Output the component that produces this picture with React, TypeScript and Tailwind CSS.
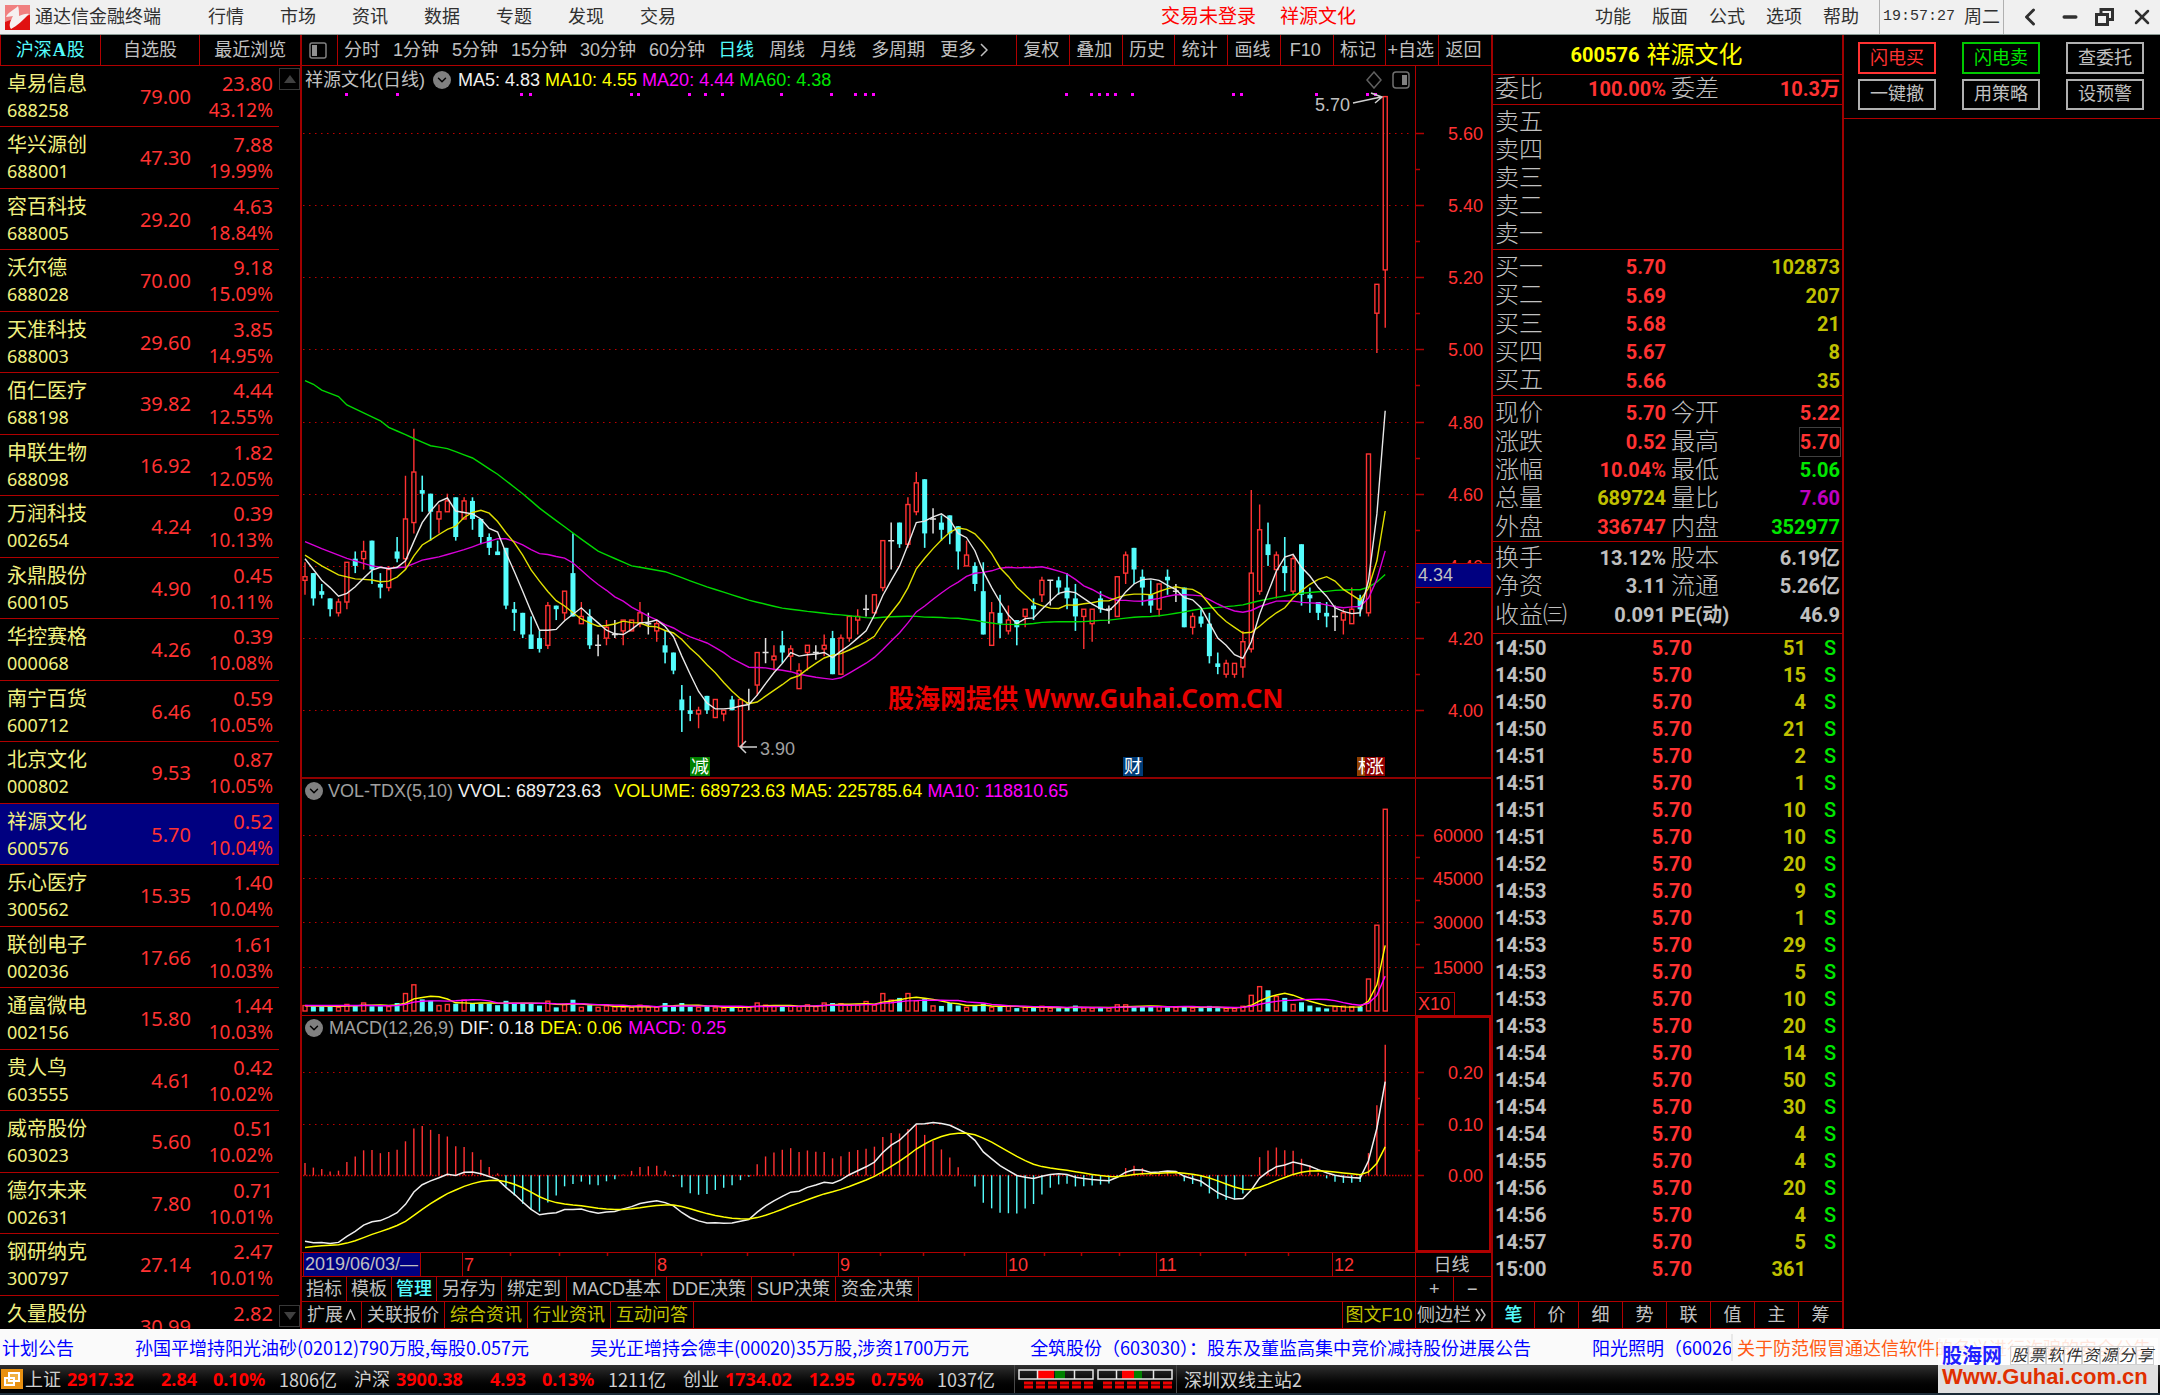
import React from 'react';
import { ChevronDown, ChevronLeft, Minus, X } from 'lucide-react';

const RED = '#ff3232';
const LINE = '#b00000';
const CYAN = '#54fcfc';

// name, code, price, change, percent; the last row is cut by the ticker
const stocks: string[][] = [
  ['卓易信息', '688258', '79.00', '23.80', '43.12%'],
  ['华兴源创', '688001', '47.30', '7.88', '19.99%'],
  ['容百科技', '688005', '29.20', '4.63', '18.84%'],
  ['沃尔德', '688028', '70.00', '9.18', '15.09%'],
  ['天准科技', '688003', '29.60', '3.85', '14.95%'],
  ['佰仁医疗', '688198', '39.82', '4.44', '12.55%'],
  ['申联生物', '688098', '16.92', '1.82', '12.05%'],
  ['万润科技', '002654', '4.24', '0.39', '10.13%'],
  ['永鼎股份', '600105', '4.90', '0.45', '10.11%'],
  ['华控赛格', '000068', '4.26', '0.39', '10.08%'],
  ['南宁百货', '600712', '6.46', '0.59', '10.05%'],
  ['北京文化', '000802', '9.53', '0.87', '10.05%'],
  ['祥源文化', '600576', '5.70', '0.52', '10.04%'],
  ['乐心医疗', '300562', '15.35', '1.40', '10.04%'],
  ['联创电子', '002036', '17.66', '1.61', '10.03%'],
  ['通富微电', '002156', '15.80', '1.44', '10.03%'],
  ['贵人鸟', '603555', '4.61', '0.42', '10.02%'],
  ['威帝股份', '603023', '5.60', '0.51', '10.02%'],
  ['德尔未来', '002631', '7.80', '0.71', '10.01%'],
  ['钢研纳克', '300797', '27.14', '2.47', '10.01%'],
  ['久量股份', '', '30.99', '2.82', ''],
];

type Kind = 'r' | 'c' | 'w';
type Candle = [number, number, number, number, Kind];

// high, body top, body bottom, low, kind (up / down / flat)
const candles: Candle[] = [
  [4.41, 4.37, 4.36, 4.32, 'r'], [4.38, 4.38, 4.31, 4.29, 'c'], [4.35, 4.33, 4.32, 4.31, 'c'], [4.31, 4.31, 4.28, 4.26, 'c'], [4.31, 4.3, 4.27, 4.26, 'r'],
  [4.41, 4.41, 4.3, 4.28, 'r'], [4.44, 4.42, 4.4, 4.38, 'c'], [4.47, 4.44, 4.42, 4.39, 'r'], [4.47, 4.47, 4.39, 4.35, 'c'], [4.38, 4.35, 4.34, 4.31, 'c'],
  [4.4, 4.39, 4.34, 4.33, 'r'], [4.48, 4.44, 4.42, 4.41, 'c'], [4.65, 4.53, 4.42, 4.39, 'r'], [4.78, 4.66, 4.52, 4.49, 'r'], [4.65, 4.61, 4.6, 4.55, 'c'],
  [4.6, 4.6, 4.55, 4.47, 'c'], [4.57, 4.55, 4.53, 4.49, 'r'], [4.6, 4.58, 4.55, 4.55, 'r'], [4.59, 4.59, 4.48, 4.47, 'c'], [4.59, 4.58, 4.53, 4.53, 'r'],
  [4.59, 4.58, 4.53, 4.5, 'c'], [4.53, 4.53, 4.48, 4.46, 'c'], [4.49, 4.48, 4.45, 4.43, 'c'], [4.47, 4.44, 4.43, 4.43, 'c'], [4.45, 4.45, 4.29, 4.28, 'c'],
  [4.3, 4.28, 4.27, 4.22, 'c'], [4.27, 4.27, 4.21, 4.2, 'c'], [4.26, 4.21, 4.17, 4.17, 'c'], [4.22, 4.2, 4.17, 4.16, 'c'], [4.3, 4.29, 4.18, 4.17, 'r'],
  [4.29, 4.29, 4.28, 4.25, 'c'], [4.33, 4.33, 4.27, 4.25, 'r'], [4.49, 4.38, 4.26, 4.26, 'c'], [4.3, 4.26, 4.24, 4.24, 'r'], [4.28, 4.26, 4.18, 4.17, 'c'],
  [4.21, 4.18, 4.18, 4.15, 'w'], [4.25, 4.23, 4.2, 4.18, 'r'], [4.25, 4.21, 4.21, 4.2, 'w'], [4.25, 4.25, 4.22, 4.18, 'r'], [4.25, 4.25, 4.22, 4.22, 'r'],
  [4.3, 4.27, 4.24, 4.23, 'r'], [4.27, 4.24, 4.24, 4.21, 'w'], [4.25, 4.24, 4.22, 4.19, 'r'], [4.22, 4.18, 4.16, 4.13, 'c'], [4.16, 4.16, 4.11, 4.1, 'c'],
  [4.07, 4.03, 4, 3.94, 'c'], [4.04, 4, 3.99, 3.97, 'c'], [4.01, 4, 3.99, 3.95, 'r'], [4.04, 4.04, 4, 3.99, 'c'], [4.03, 4.03, 3.98, 3.98, 'r'],
  [4, 4, 3.99, 3.97, 'r'], [4.04, 4.03, 4, 4, 'c'], [4.03, 4.03, 3.9, 3.9, 'r'], [4.06, 4.02, 4.02, 4, 'w'], [4.16, 4.16, 4.07, 4.04, 'r'],
  [4.2, 4.16, 4.16, 4.13, 'w'], [4.18, 4.15, 4.14, 4.11, 'r'], [4.22, 4.18, 4.16, 4.13, 'c'], [4.18, 4.17, 4.15, 4.11, 'r'], [4.13, 4.11, 4.06, 4.06, 'r'],
  [4.18, 4.18, 4.16, 4.11, 'r'], [4.18, 4.16, 4.16, 4.14, 'w'], [4.21, 4.18, 4.17, 4.15, 'r'], [4.22, 4.2, 4.1, 4.1, 'c'], [4.21, 4.2, 4.1, 4.1, 'r'],
  [4.26, 4.26, 4.2, 4.19, 'r'], [4.28, 4.26, 4.25, 4.21, 'r'], [4.32, 4.28, 4.28, 4.26, 'w'], [4.32, 4.32, 4.27, 4.27, 'r'], [4.47, 4.47, 4.34, 4.33, 'r'],
  [4.52, 4.47, 4.47, 4.39, 'w'], [4.52, 4.52, 4.46, 4.45, 'c'], [4.59, 4.57, 4.46, 4.45, 'r'], [4.66, 4.63, 4.55, 4.54, 'r'], [4.64, 4.64, 4.49, 4.45, 'c'],
  [4.56, 4.53, 4.53, 4.49, 'w'], [4.54, 4.52, 4.5, 4.47, 'c'], [4.54, 4.54, 4.49, 4.46, 'c'], [4.51, 4.51, 4.44, 4.39, 'c'], [4.47, 4.43, 4.4, 4.4, 'r'],
  [4.41, 4.4, 4.35, 4.33, 'c'], [4.41, 4.33, 4.21, 4.21, 'c'], [4.3, 4.27, 4.18, 4.18, 'r'], [4.32, 4.27, 4.24, 4.2, 'c'], [4.29, 4.25, 4.22, 4.21, 'r'],
  [4.25, 4.25, 4.23, 4.18, 'c'], [4.28, 4.28, 4.26, 4.23, 'r'], [4.31, 4.29, 4.28, 4.25, 'c'], [4.37, 4.36, 4.32, 4.3, 'r'], [4.36, 4.36, 4.36, 4.29, 'w'],
  [4.37, 4.36, 4.34, 4.32, 'c'], [4.38, 4.34, 4.31, 4.28, 'c'], [4.35, 4.31, 4.26, 4.22, 'c'], [4.28, 4.28, 4.26, 4.17, 'r'], [4.28, 4.28, 4.24, 4.19, 'r'],
  [4.33, 4.31, 4.28, 4.27, 'c'], [4.29, 4.28, 4.28, 4.24, 'w'], [4.37, 4.37, 4.26, 4.26, 'r'], [4.44, 4.43, 4.38, 4.35, 'r'], [4.45, 4.45, 4.39, 4.35, 'c'],
  [4.39, 4.37, 4.34, 4.29, 'c'], [4.36, 4.32, 4.29, 4.27, 'c'], [4.35, 4.35, 4.28, 4.26, 'r'], [4.39, 4.37, 4.36, 4.32, 'c'], [4.35, 4.33, 4.33, 4.3, 'w'],
  [4.34, 4.34, 4.23, 4.23, 'c'], [4.27, 4.26, 4.23, 4.21, 'r'], [4.28, 4.26, 4.24, 4.23, 'c'], [4.27, 4.24, 4.15, 4.13, 'c'], [4.16, 4.13, 4.12, 4.1, 'c'],
  [4.14, 4.13, 4.1, 4.09, 'r'], [4.13, 4.13, 4.1, 4.09, 'r'], [4.22, 4.19, 4.12, 4.09, 'r'], [4.61, 4.38, 4.17, 4.16, 'r'], [4.57, 4.5, 4.33, 4.32, 'r'],
  [4.52, 4.46, 4.43, 4.4, 'c'], [4.44, 4.43, 4.39, 4.31, 'r'], [4.48, 4.4, 4.38, 4.33, 'c'], [4.43, 4.42, 4.33, 4.32, 'r'], [4.46, 4.46, 4.32, 4.29, 'c'],
  [4.34, 4.32, 4.31, 4.27, 'c'], [4.3, 4.3, 4.27, 4.25, 'c'], [4.3, 4.27, 4.26, 4.23, 'c'], [4.29, 4.26, 4.26, 4.22, 'w'], [4.28, 4.27, 4.25, 4.21, 'r'],
  [4.34, 4.28, 4.24, 4.24, 'r'], [4.32, 4.31, 4.28, 4.26, 'c'], [4.71, 4.71, 4.27, 4.26, 'r'], [5.18, 5.18, 5.1, 4.99, 'r'], [5.7, 5.7, 5.22, 5.06, 'r'],
];

// one unit is 124 lots on the X10 scale
const volumes = [
  15, 13, 13, 13, 10, 18, 16, 22, 13, 13, 12, 22, 48, 72, 32, 28, 15, 18, 20, 30, 22, 20, 20, 16, 28, 22,
  20, 20, 15, 27, 10, 18, 31, 10, 16, 10, 14, 12, 10, 10, 16, 11, 10, 22, 13, 22, 12, 10, 13, 9, 8, 9,
  12, 12, 22, 16, 14, 12, 13, 12, 17, 12, 22, 22, 20, 16, 17, 26, 16, 48, 30, 36, 48, 28, 34, 14, 14, 22,
  15, 10, 14, 20, 10, 12, 13, 8, 10, 9, 13, 8, 8, 8, 15, 9, 8, 8, 8, 17, 17, 12, 12, 12, 12, 10,
  10, 13, 8, 8, 14, 8, 7, 7, 13, 43, 67, 57, 40, 36, 18, 24, 15, 10, 7, 12, 13, 12, 12, 88, 236, 555,
];

const closes = candles.map(([, top, bottom, , kind]) => (kind === 'r' ? top : bottom));

const px = (i: number) => 3 + i * 8.374;
const priceY = (p: number) => 644.3 - (p - 4) * 361;
const volY = (v: number) => 232 - v * 0.3635;
const macdY = (v: number) => 159.3 - v * 516;

// moving average; the days before the window is full come from known points
function average(data: number[], n: number, seed: number[][]) {
  return data.map((_, i) => {
    if (i >= n - 1) {
      return data.slice(i - n + 1, i + 1).reduce((a, b) => a + b, 0) / n;
    }
    const next = seed.findIndex(([k]) => k >= i);
    if (next === -1) return seed[seed.length - 1][1];
    if (next === 0) return seed[0][1];
    const [k0, v0] = seed[next - 1];
    const [k1, v1] = seed[next];
    return v0 + ((v1 - v0) * (i - k0)) / (k1 - k0);
  });
}

const toPoints = (values: number[], y: (v: number) => number) =>
  values.map((v, i) => `${px(i).toFixed(1)},${y(v).toFixed(1)}`).join(' ');

const priceLines = [
  { color: '#00d800', values: average(closes, 60, [[0, 4.913], [1, 4.903], [2, 4.887], [4, 4.869], [5, 4.846], [9, 4.802], [10, 4.784], [13, 4.753], [15, 4.733], [17, 4.725], [20, 4.699], [23, 4.654], [26, 4.6], [28, 4.56], [32, 4.491], [35, 4.441], [39, 4.4], [43, 4.384], [48, 4.342], [53, 4.305], [57, 4.283], [61, 4.271]]) },
  { color: '#d800d8', values: average(closes, 20, [[0, 4.467], [2, 4.448], [5, 4.421], [8, 4.4], [10, 4.393], [12, 4.397], [14, 4.416], [16, 4.425], [18, 4.438]]) },
  { color: '#e0e000', values: average(closes, 10, [[0, 4.43], [2, 4.4], [4, 4.375], [6, 4.364], [8, 4.361]]) },
  { color: '#e8e8e8', values: average(closes, 5, [[0, 4.42], [1, 4.39], [2, 4.36], [3, 4.34]]) },
];

const volumeLines = [
  { color: '#ffff00', values: average(volumes, 5, [[0, 14], [4, 13]]) },
  { color: '#ff00ff', values: average(volumes, 10, [[0, 15], [9, 15]]) },
];

function buildMacd() {
  let fast = 4.462;
  let slow = 4.59;
  let dea = -0.14;
  return closes.map((c, i) => {
    if (i > 0) {
      fast += ((c - fast) * 2) / 13;
      slow += ((c - slow) * 2) / 27;
    }
    const dif = fast - slow;
    if (i > 0) dea += (dif - dea) * 0.2;
    return { dif, dea, bar: 2 * (dif - dea) };
  });
}
const macd = buildMacd();

const signalDots = [45, 96, 220, 229, 330, 337, 388, 404, 421, 480, 530, 554, 564, 572, 765, 790, 798, 806, 814, 831, 932, 940, 1015, 1066, 1074];

const months: [number, string][] = [[161, '7'], [354, '8'], [537, '9'], [705, '10'], [855, '11'], [1031, '12']];
const weekTicks = [209, 258, 306, 400, 446, 492, 579, 622, 663, 743, 780, 818, 899, 944, 987];

// time, volume, side
const trades: [string, string, string][] = [
  ['14:50', '51', 'S'], ['14:50', '15', 'S'], ['14:50', '4', 'S'], ['14:50', '21', 'S'],
  ['14:51', '2', 'S'], ['14:51', '1', 'S'], ['14:51', '10', 'S'], ['14:51', '10', 'S'],
  ['14:52', '20', 'S'], ['14:53', '9', 'S'], ['14:53', '1', 'S'], ['14:53', '29', 'S'],
  ['14:53', '5', 'S'], ['14:53', '10', 'S'], ['14:53', '20', 'S'], ['14:54', '14', 'S'],
  ['14:54', '50', 'S'], ['14:54', '30', 'S'], ['14:54', '4', 'S'], ['14:55', '4', 'S'],
  ['14:56', '20', 'S'], ['14:56', '4', 'S'], ['14:57', '5', 'S'], ['15:00', '361', ''],
];

const TitleBar: React.FC = () => (
  <header className="flex h-[35px] shrink-0 items-center border-b border-[#8a9a94] bg-[#f0f0f0] text-[18px] text-[#303030]">
    <svg className="ml-[5px] h-[25px] w-[25px]" viewBox="0 0 25 25" aria-hidden="true">
      <rect width="25" height="25" fill="#e01010" />
      <path d="M0 0h25v10C17 11 8 14 0 17z" fill="#f08080" />
      <path d="M13 1C9 5 3 7 1 12c3 0 5-1 7-1-2 4-5 9-2 13 6-3 12-9 18-15-3-1-7 1-10 2 0-4 0-7-1-10z" fill="#f6f0f0" />
    </svg>
    <span className="ml-[5px]">通达信金融终端</span>
    <nav className="ml-[47px] flex gap-9">
      {['行情', '市场', '资讯', '数据', '专题', '发现', '交易'].map((m) => (
        <button key={m} type="button">{m}</button>
      ))}
    </nav>
    <div className="flex flex-1 justify-end gap-6 pr-[239px] text-[19px] text-[#ff0000]">
      <button type="button">交易未登录</button>
      <button type="button">祥源文化</button>
    </div>
    <nav className="flex gap-[21px]">
      {['功能', '版面', '公式', '选项', '帮助'].map((m) => (
        <button key={m} type="button">{m}</button>
      ))}
    </nav>
    <div className="ml-5 flex h-full w-[125px] items-center justify-center gap-[9px] border-x border-[#b0b0b0]">
      <time className="font-['Liberation_Mono',monospace] text-[15px]">19:57:27</time>
      <span>周二</span>
    </div>
    <div className="flex w-[156px] items-center justify-between pr-1.5 pl-3">
      <button type="button" aria-label="后退"><ChevronLeft className="h-7 w-7" strokeWidth={2.5} /></button>
      <button type="button" aria-label="最小化"><Minus className="h-5 w-5" strokeWidth={4} /></button>
      <button type="button" aria-label="还原">
        <svg className="h-[18px] w-[19px]" viewBox="0 0 19 18" fill="none" stroke="currentColor" strokeWidth="3">
          <path d="M1.5 6.5h11v10h-11z" />
          <path d="M6 6V1.5h11.500v10H13" />
        </svg>
      </button>
      <button type="button" aria-label="关闭"><X className="h-6 w-6" strokeWidth={2.5} /></button>
    </div>
  </header>
);

const StockList: React.FC = () => (
  <aside className="flex w-[302px] shrink-0 flex-col border-r-2 border-[#a00000]">
    <div className="grid h-[31px] shrink-0 grid-cols-3 border-b border-l border-[#b00000] text-[18px] text-[#c0c0c0]">
      <button type="button" className="border-r border-[#b00000] text-[#54fcfc]">
        沪深<b className="mx-px font-['Liberation_Serif',serif]">A</b>股
      </button>
      <button type="button" className="border-r border-[#b00000]">自选股</button>
      <button type="button">最近浏览</button>
    </div>
    <div className="flex min-h-0 flex-1 overflow-hidden">
      <table className="block flex-1 overflow-hidden font-['Noto_Sans','Noto_Sans_CJK_SC',sans-serif] leading-[26px] text-[#ff3232]">
        <tbody className="block">
          {stocks.map(([name, code, price, change, percent]) => (
            <tr
              key={name}
              className={`flex h-[61px] items-start border-b border-[#b00000] pt-[5px] pr-[6px] pl-[7px] even:h-[62px] ${
                code === '600576' ? 'bg-[#000080]' : ''
              }`}
            >
              <td className="w-[90px] p-0 text-[#f0f080]">
                <div className="text-[20px]">{name}</div>
                <div className="text-[18px]">{code}</div>
              </td>
              <td className="w-[94px] p-0 pt-[13px] text-right text-[20px]">{price}</td>
              <td className="flex-1 p-0 text-right">
                <div className="text-[20px]">{change}</div>
                <div className="text-[19px]">{percent}</div>
              </td>
            </tr>
          ))}
        </tbody>
      </table>
      <div className="flex w-[21px] flex-col justify-between py-0.5">
        <button type="button" aria-label="上移" className="flex h-[22px] items-center justify-center border border-[#383838]">
          <svg className="h-2 w-3" viewBox="0 0 12 8"><path d="M6 0l6 8H0z" fill="#404040" /></svg>
        </button>
        <button type="button" aria-label="下移" className="flex h-[22px] items-center justify-center border border-[#383838]">
          <svg className="h-2 w-3" viewBox="0 0 12 8"><path d="M0 0h12L6 8z" fill="#404040" /></svg>
        </button>
      </div>
    </div>
  </aside>
);

const ChartToolbar: React.FC = () => (
  <div className="flex h-[31px] shrink-0 items-center border-b border-[#b00000] text-[18px] text-[#c0c0c0]">
    <button type="button" aria-label="侧栏" className="flex h-full w-[35px] items-center pl-[7px]">
      <svg className="h-[17px] w-[18px]" viewBox="0 0 18 17" fill="none">
        <rect x="1" y="1" width="16" height="15" rx="2" stroke="#808080" strokeWidth="1.500" />
        <rect x="3" y="3" width="5" height="11" fill="#909090" />
      </svg>
    </button>
    <div className="flex h-full items-center gap-[13px] border-l border-[#b00000] pl-[6px]">
      {['分时', '1分钟', '5分钟', '15分钟', '30分钟', '60分钟'].map((p) => (
        <button key={p} type="button">{p}</button>
      ))}
    </div>
    <div className="ml-[13px] flex items-center gap-[15px]">
      <button type="button" className="text-[#54fcfc]">日线</button>
      <button type="button">周线</button>
      <button type="button">月线</button>
      <button type="button">多周期</button>
      <button type="button" className="flex items-center gap-1">
        更多
        <svg className="h-[14px] w-2" viewBox="0 0 8 14" fill="none" stroke="currentColor" strokeWidth="1.500">
          <path d="M1 1l6 6-6 6" />
        </svg>
      </button>
    </div>
    <div className="ml-auto grid h-full w-[475px] grid-cols-9">
      {['复权', '叠加', '历史', '统计', '画线', 'F10', '标记', '+自选', '返回'].map((p) => (
        <button key={p} type="button" className="border-l border-[#b00000] pr-[3px] whitespace-nowrap">{p}</button>
      ))}
    </div>
  </div>
);

const Toggle: React.FC = () => (
  <button type="button" aria-label="参数" className="flex h-[18px] w-[18px] items-center justify-center rounded-full bg-[#808080] text-black">
    <ChevronDown className="h-3.5 w-3.5" strokeWidth={2.5} />
  </button>
);

const Grid: React.FC<{ ys: number[] }> = ({ ys }) => (
  <g stroke="#c00000" strokeWidth="1" strokeDasharray="1.5 4.5">
    {ys.map((y) => (
      <path key={y} d={`M1 ${Math.round(y) + 0.5}H1110`} />
    ))}
  </g>
);

interface AxisProps {
  height: number;
  labels: [number, string][];
  minor: number[];
}

const Axis: React.FC<AxisProps> = ({ height, labels, minor }) => (
  <svg className="block h-full w-full" viewBox={`0 0 75 ${height}`} preserveAspectRatio="xMinYMin meet">
    {labels.map(([y, text]) => (
      <g key={text}>
        <path d={`M0 ${Math.round(y) + 0.5}h8`} stroke={LINE} strokeWidth="1.5" />
        <text x="67" y={y + 7} textAnchor="end" fontSize="18" fill={RED}>{text}</text>
      </g>
    ))}
    {minor.map((y) => (
      <path key={y} d={`M0 ${Math.round(y) + 0.5}h4`} stroke={LINE} strokeWidth="1.5" />
    ))}
  </svg>
);

const PricePane: React.FC = () => {
  const grid = [5.6, 5.4, 5.2, 5, 4.8, 4.6, 4.4, 4.2, 4];
  return (
    <section className="flex min-h-0 flex-1 border-b-2 border-[#900000]">
      <div className="flex min-w-0 flex-1 flex-col">
        <div className="flex h-7 shrink-0 items-center gap-[5px] pl-[3px] text-[18px]">
          <div className="flex items-center gap-2 pr-0.5 text-[#c0c0c0]">
            祥源文化(日线)
            <Toggle />
          </div>
          <span className="text-[#f0f0f0]">MA5: 4.83</span>
          <span className="text-[#ffff00]">MA10: 4.55</span>
          <span className="text-[#ff00ff]">MA20: 4.44</span>
          <span className="text-[#00e600]">MA60: 4.38</span>
          <svg className="mr-1 ml-auto h-[18px] w-[46px]" viewBox="0 0 46 18" fill="none" stroke="#606060" strokeWidth="1.500">
            <path d="M9 1l7 8-7 8-7-8z" />
            <rect x="28" y="1" width="16" height="16" rx="3" stroke="#707070" />
            <rect x="37" y="4" width="5" height="10" fill="#808080" stroke="none" />
          </svg>
        </div>
        <svg className="block min-h-0 w-full flex-1 overflow-visible" viewBox="0 28 1113 683" preserveAspectRatio="xMinYMin meet">
          <Grid ys={grid.map(priceY)} />
          {signalDots.map((x) => (
            <rect key={x} x={x - 2} y="27" width="3" height="3" fill="#ff00ff" />
          ))}
          {candles.map(([high, top, bottom, low, kind], i) => {
            const x = px(i);
            if (kind === 'w') {
              return <path key={i} d={`M${x} ${priceY(high)}V${priceY(low)}M${x - 3} ${priceY(top)}h6`} stroke="#e0e0e0" strokeWidth="1.500" />;
            }
            if (kind === 'c') {
              return (
                <g key={i} fill={CYAN}>
                  <rect x={x - 0.8} y={priceY(high)} width="1.600" height={priceY(low) - priceY(high)} />
                  <rect x={x - 2.5} y={priceY(top)} width="5" height={Math.max(priceY(bottom) - priceY(top), 3)} />
                </g>
              );
            }
            return (
              <g key={i} fill="none" stroke={RED} strokeWidth="1.400">
                <path d={`M${x} ${priceY(high)}V${priceY(top)}M${x} ${priceY(bottom)}V${priceY(low)}`} />
                <rect x={x - 2} y={priceY(top)} width="4" height={priceY(bottom) - priceY(top)} />
              </g>
            );
          })}
          {priceLines.map(({ color, values }) => (
            <polyline key={color} points={toPoints(values, priceY)} fill="none" stroke={color} strokeWidth="1.400" />
          ))}
          <text x="1013" y="45" fontSize="18" fill="#c0c0c0">5.70</text>
          <path d="M1051 37l28-6M1069 27l11 4-7 6" fill="none" stroke="#d0d0d0" strokeWidth="1.500" />
          <text x="458" y="689" fontSize="18" fill="#a0a0a0">3.90</text>
          <path d="M455 681h-17M444 675l-6 6 6 6" fill="none" stroke="#d0d0d0" strokeWidth="1.500" />
          <text x="586" y="642" fontSize="26" fontWeight="bold" fill="#e60000" className="font-['Noto_Sans','Noto_Sans_CJK_SC',sans-serif]">
            股海网提供 Www.Guhai.Com.CN
          </text>
          <g fontSize="18" fill="#fff" textAnchor="middle">
            <rect x="388" y="691" width="20" height="19" fill="#008000" />
            <text x="398" y="707">减</text>
            <rect x="821" y="691" width="20" height="19" fill="#003c78" />
            <text x="831" y="707">财</text>
            <rect x="1055" y="691" width="20" height="19" fill="#904000" />
            <text x="1065" y="707">标</text>
            <rect x="1063" y="691" width="20" height="19" fill="#900000" />
            <text x="1073" y="707">涨</text>
          </g>
        </svg>
      </div>
      <div className="relative w-[76px] border-l border-[#b00000]">
        <Axis
          height={711}
          labels={grid.map((p) => [priceY(p), p.toFixed(2)])}
          minor={[5.5, 5.3, 5.1, 4.9, 4.7, 4.5, 4.3, 4.1].map(priceY)}
        />
        <div className="absolute top-[497px] left-0 flex h-[25px] w-full items-center border-y border-[#b00000] bg-[#000080] pl-0.5 text-[18px] text-[#c0c0c0]">
          4.34
        </div>
      </div>
    </section>
  );
};

const VolumePane: React.FC = () => (
  <section className="flex h-[237px] shrink-0 border-b border-[#b00000]">
    <div className="flex min-w-0 flex-1 flex-col">
      <div className="flex h-6 shrink-0 items-center gap-[5px] pl-[3px] text-[18px]">
        <Toggle />
        <span className="text-[#a0a0a0]">VOL-TDX(5,10)</span>
        <span className="mr-2 text-[#f0f0f0]">VVOL: 689723.63</span>
        <span className="text-[#ffff00]">VOLUME: 689723.63</span>
        <span className="text-[#ffff00]">MA5: 225785.64</span>
        <span className="text-[#ff00ff]">MA10: 118810.65</span>
      </div>
      <svg className="block min-h-0 w-full flex-1" viewBox="0 24 1113 212" preserveAspectRatio="xMinYMin meet">
        <Grid ys={[56, 99, 143, 188]} />
        {volumes.map((v, i) =>
          candles[i][4] === 'c' ? (
            <rect key={i} x={px(i) - 2.5} y={volY(v)} width="5" height={232.5 - volY(v)} fill={CYAN} />
          ) : (
            <rect key={i} x={px(i) - 2} y={volY(v)} width="4" height={232 - volY(v)} fill="none" stroke={RED} strokeWidth="1.400" />
          ),
        )}
        {volumeLines.map(({ color, values }) => (
          <polyline key={color} points={toPoints(values, volY)} fill="none" stroke={color} strokeWidth="1.400" />
        ))}
      </svg>
    </div>
    <div className="relative w-[76px] border-l border-[#b00000]">
      <Axis
        height={236}
        labels={[[56, '60000'], [99, '45000'], [143, '30000'], [188, '15000']]}
        minor={[78, 121, 165]}
      />
      <div className="absolute bottom-0 left-0 h-[23px] w-[39px] border-t border-r border-[#b00000] pl-0.5 text-[18px] leading-[22px] text-[#ff3232]">
        X10
      </div>
    </div>
  </section>
);

const MacdPane: React.FC = () => (
  <section className="flex h-[237px] shrink-0 border-b border-[#b00000]">
    <div className="flex min-w-0 flex-1 flex-col">
      <div className="flex h-6 shrink-0 items-center gap-[6px] pl-[3px] text-[18px]">
        <Toggle />
        <span className="text-[#a0a0a0]">MACD(12,26,9)</span>
        <span className="text-[#f0f0f0]">DIF: 0.18</span>
        <span className="text-[#ffff00]">DEA: 0.06</span>
        <span className="text-[#ff00ff]">MACD: 0.25</span>
      </div>
      <svg className="block min-h-0 w-full flex-1" viewBox="0 24 1113 212" preserveAspectRatio="xMinYMin meet">
        <Grid ys={[56, 108]} />
        <path d="M1 159.500H1110" stroke="#d00000" strokeWidth="1.500" strokeDasharray="1.500 1.500" />
        {macd.map(({ bar }, i) => (
          <path key={i} d={`M${px(i)} 159.300V${macdY(bar)}`} stroke={bar > 0 ? RED : CYAN} strokeWidth="1.400" />
        ))}
        <polyline points={toPoints(macd.map((m) => m.dif), macdY)} fill="none" stroke="#f0f0f0" strokeWidth="1.500" />
        <polyline points={toPoints(macd.map((m) => m.dea), macdY)} fill="none" stroke="#ffff00" strokeWidth="1.500" />
      </svg>
    </div>
    <div className="w-[76px] border-l border-[#b00000] shadow-[inset_0_0_0_2px_#b00000]">
      <Axis height={236} labels={[[56, '0.20'], [108, '0.10'], [159, '0.00']]} minor={[82, 134]} />
    </div>
  </section>
);

const DateAxis: React.FC = () => (
  <div className="flex h-6 shrink-0 border-b border-[#b00000]">
    <svg className="block min-w-0 flex-1" viewBox="0 0 1113 23" preserveAspectRatio="xMinYMin meet">
      <rect x="1" y="0" width="117" height="23" fill="#000080" />
      <path d="M1.500 0v23M118.500 0v23" stroke={LINE} />
      <text x="3" y="17" fontSize="18" fill="#c0c0c0">2019/06/03/—</text>
      {months.map(([x, label]) => (
        <g key={label}>
          <path d={`M${x - 0.5} 0v23`} stroke={LINE} />
          <text x={x + 1} y="18" fontSize="18" fill={RED}>{label}</text>
        </g>
      ))}
      {weekTicks.map((x) => (
        <path key={x} d={`M${x - 0.5} 0v3`} stroke={LINE} strokeWidth="1.500" />
      ))}
    </svg>
    <button type="button" className="w-[76px] border-l border-[#b00000] pr-1 text-[18px] leading-none text-[#c0c0c0]">日线</button>
  </div>
);

const BottomTabs: React.FC = () => (
  <div className="shrink-0 text-[18px] leading-none text-[#c0c0c0]">
    <div className="flex h-[25px] border-b border-[#b00000]">
      {['指标', '模板', '管理'].map((t) => (
        <button key={t} type="button" className={`border-r border-[#b00000] px-1 ${t === '管理' ? 'font-medium text-[#54fcfc]' : ''}`}>
          {t}
        </button>
      ))}
      {['另存为', '绑定到', 'MACD基本', 'DDE决策', 'SUP决策', '资金决策'].map((t) => (
        <button key={t} type="button" className="border-r border-[#b00000] px-[5px]">{t}</button>
      ))}
      <div className="ml-auto grid w-[76px] grid-cols-2 border-l border-[#b00000]">
        <button type="button" className="border-r border-[#b00000]">+</button>
        <button type="button">−</button>
      </div>
    </div>
    <div className="flex h-[27px] border-b border-[#b00000]">
      <button type="button" className="flex items-center gap-0.5 border-r border-[#b00000] px-[5px]">
        扩展
        <svg className="h-3 w-[11px]" viewBox="0 0 11 12" fill="none" stroke="currentColor" strokeWidth="1.500">
          <path d="M1 11l4.500-10L10 11" />
        </svg>
      </button>
      <button type="button" className="border-r border-[#b00000] px-[5px]">关联报价</button>
      {['综合资讯', '行业资讯', '互动问答'].map((t) => (
        <button key={t} type="button" className="border-r border-[#b00000] px-[5px] text-[#c0c000]">{t}</button>
      ))}
      <button type="button" className="ml-auto w-[73px] border-l border-[#b00000] whitespace-nowrap text-[#c0c000]">图文F10</button>
      <button type="button" className="flex w-[76px] items-center gap-1 border-l border-[#b00000] pl-px whitespace-nowrap">
        侧边栏
        <svg className="h-3.5 w-3" viewBox="0 0 12 14" fill="none" stroke="currentColor" strokeWidth="1.500">
          <path d="M1 1l4 6-4 6M6 1l4 6-4 6" />
        </svg>
      </button>
    </div>
  </div>
);

const Label: React.FC<{ children: React.ReactNode }> = ({ children }) => (
  <span className="text-[24px] font-light text-[#c0c0c0]">{children}</span>
);

// label, value, colour class, label, value, colour class
const quoteRows: string[][] = [
  ['现价', '5.70', 'text-[#ff3232]', '今开', '5.22', 'text-[#ff3232]'],
  ['涨跌', '0.52', 'text-[#ff3232]', '最高', '5.70', 'text-[#ff3232] outline outline-[#404040]'],
  ['涨幅', '10.04%', 'text-[#ff3232]', '最低', '5.06', 'text-[#00e600]'],
  ['总量', '689724', 'text-[#c0c000]', '量比', '7.60', 'text-[#c000c0]'],
  ['外盘', '336747', 'text-[#ff3232]', '内盘', '352977', 'text-[#00e600]'],
];
const basicRows: string[][] = [
  ['换手', '13.12%', '', '股本', '6.19亿', ''],
  ['净资', '3.11', '', '流通', '5.26亿', ''],
  ['收益㈢', '0.091', '', 'PE(动)', '46.9', ''],
];

const QuoteRow: React.FC<{ row: string[] }> = ({ row }) => (
  <div className="grid grid-cols-[171px_1fr] items-center gap-[5px]">
    <div className="flex items-center justify-between"><Label>{row[0]}</Label><b className={row[2]}>{row[1]}</b></div>
    <div className="flex items-center justify-between">
      {row[3].startsWith('PE') ? <b>{row[3]}</b> : <Label>{row[3]}</Label>}
      <b className={row[5]}>{row[4]}</b>
    </div>
  </div>
);

const QuotePanel: React.FC = () => (
  <section className="flex w-[353px] shrink-0 flex-col border-x-2 border-[#a00000] font-['Roboto','Noto_Sans_CJK_SC',sans-serif] text-[20px] leading-[28px] text-[#c0c0c0]">
    <h1 className="flex h-[40px] shrink-0 items-center justify-center gap-[7px] border-b border-[#b00000] pr-[22px] text-[#ffff00]">
      <b>600576</b>
      <span className="text-[24px]">祥源文化</span>
    </h1>
    <div className="h-[30px] shrink-0 border-b border-[#b00000] px-[2px]">
      <QuoteRow row={['委比', '100.00%', 'text-[#ff3232]', '委差', '10.3万', 'text-[#ff3232]']} />
    </div>
    <table className="block">
      <tbody className="grid h-[145px] grid-rows-5 border-b border-[#b00000] px-[2px] pt-[3px]">
        {['卖五', '卖四', '卖三', '卖二', '卖一'].map((l) => (
          <tr key={l} className="flex items-center"><td className="p-0"><Label>{l}</Label></td></tr>
        ))}
      </tbody>
      <tbody className="grid h-[146px] grid-rows-5 border-b border-[#b00000] px-[2px] pt-[3px]">
        {[['买一', '5.70', '102873'], ['买二', '5.69', '207'], ['买三', '5.68', '21'], ['买四', '5.67', '8'], ['买五', '5.66', '35']].map(([l, price, vol]) => (
          <tr key={l} className="flex items-center font-bold">
            <td className="w-[72px] p-0"><Label>{l}</Label></td>
            <td className="w-[99px] p-0 text-right text-[#ff3232]">{price}</td>
            <td className="flex-1 p-0 text-right text-[#c0c000]">{vol}</td>
          </tr>
        ))}
      </tbody>
    </table>
    <div className="grid h-[146px] shrink-0 grid-rows-5 border-b border-[#b00000] px-[2px] pt-[3px]">
      {quoteRows.map((r) => <QuoteRow key={r[0]} row={r} />)}
    </div>
    <div className="grid h-[92px] shrink-0 grid-rows-3 border-b border-[#b00000] px-[2px] pt-[2px] pb-1">
      {basicRows.map((r) => <QuoteRow key={r[0]} row={r} />)}
    </div>
    <table className="block min-h-0 flex-1">
      <tbody className="block font-bold">
        {trades.map(([time, vol, side], i) => (
          <tr key={i} className="flex h-[27px] items-center px-[2px]">
            <td className="w-[98px] p-0">{time}</td>
            <td className="w-[99px] p-0 text-right text-[#ff3232]">5.70</td>
            <td className="w-[114px] p-0 text-right text-[#c0c000]">{vol}</td>
            <td className="flex-1 p-0 pr-1 text-right font-medium text-[#00e600]">{side}</td>
          </tr>
        ))}
      </tbody>
    </table>
    <div className="grid h-[28px] shrink-0 grid-cols-[41px_repeat(7,1fr)] border-y border-[#b00000] text-[18px] leading-none">
      {['笔', '价', '细', '势', '联', '值', '主', '筹'].map((t, i) => (
        <button key={t} type="button" className={i === 0 ? 'font-medium text-[#54fcfc]' : 'border-l border-[#b00000]'}>{t}</button>
      ))}
    </div>
  </section>
);

const TradePanel: React.FC = () => (
  <aside className="w-[316px] shrink-0">
    <div className="grid h-[84px] grid-cols-3 gap-x-[26px] gap-y-[5px] border-b border-[#b00000] px-4 pt-[7px] pb-2 pl-[14px] text-[18px] leading-none text-[#c0c0c0]">
      <button type="button" className="border-2 border-[#ff3232] text-[#ff3232]">闪电买</button>
      <button type="button" className="border-2 border-[#00c800] text-[#00e600]">闪电卖</button>
      {['查委托', '一键撤', '用策略', '设预警'].map((t) => (
        <button key={t} type="button" className="border-2 border-[#b0b0b0]">{t}</button>
      ))}
    </div>
  </aside>
);

const NewsTicker: React.FC = () => (
  <div className="flex h-9 shrink-0 items-center overflow-hidden bg-[#fafafa] font-['Noto_Sans_CJK_SC',sans-serif] text-[18px] whitespace-nowrap text-[#0000ff]">
    <div className="flex w-[1731px] gap-[61px] overflow-hidden">
      <a href="#n1" className="pl-0.5">计划公告</a>
      <a href="#n2">孙国平增持阳光油砂(02012)790万股,每股0.057元</a>
      <a href="#n3">吴光正增持会德丰(00020)35万股,涉资1700万元</a>
      <a href="#n4">全筑股份（603030）：股东及董监高集中竞价减持股份进展公告</a>
      <a href="#n5">阳光照明（60026</a>
    </div>
    <a href="#n6" className="border-l-2 border-[#e8e8e8] pl-1 text-[#ff5a14]">关于防范假冒通达信软件的名义进行诈骗的安全公告</a>
  </div>
);

const indices = [
  ['上证', '2917.32', '2.84', '0.10%', '1806亿'],
  ['沪深', '3900.38', '4.93', '0.13%', '1211亿'],
  ['创业', '1734.02', '12.95', '0.75%', '1037亿'],
];

const Meter: React.FC<{ red: number; redWidth: number; green: number; greenWidth: number }> = ({ red, redWidth, green, greenWidth }) => (
  <svg className="h-5 w-[76px]" viewBox="0 0 76 20">
    <rect x={red} y="1" width={redWidth} height="9" fill="#ff0000" />
    <rect x={green} y="1" width={greenWidth} height="9" fill="#008000" />
    <path d="M1 1h74v9H1zM19.500 1v9M56.500 1v9" fill="none" stroke="#e8e8e8" strokeWidth="1.500" />
    {[6, 18, 30, 42, 54, 66].map((x) => (
      <path key={x} d={`M${x} 14h9M${x} 18h9`} stroke="#f00000" strokeWidth="3" />
    ))}
  </svg>
);

const StatusBar: React.FC = () => (
  <footer className="flex h-[30px] shrink-0 items-center border-b-2 border-[#1c2c38] bg-linear-to-b from-[#303030] to-black font-['Noto_Sans','Noto_Sans_CJK_SC',sans-serif] text-[18px] text-[#d0d0d0]">
    <svg className="mr-[2px] ml-px h-5 w-[22px] shrink-0" viewBox="0 0 22 20">
      <rect width="22" height="20" fill="#e89010" />
      <path d="M8 4h10v8H8zM4 9h9v7H4z" fill="#f0b040" stroke="#fff" strokeWidth="2" />
    </svg>
    {indices.map(([name, value, change, percent, amount]) => (
      <div key={name} className="flex w-[329px] items-center">
        <span className="w-[42px]">{name}</span>
        <b className="w-[80px] text-[#ff0000]">{value}</b>
        <b className="w-[50px] text-right text-[#ff0000]">{change}</b>
        <b className="w-[82px] pl-4 text-[#ff0000]">{percent}</b>
        <span className="font-['Noto_Sans_CJK_SC',sans-serif]">{amount}</span>
      </div>
    ))}
    <div className="ml-0.5 flex h-full items-center gap-[3px] border-x border-[#484848] px-[3px]">
      <Meter red={20} redWidth={16} green={37} greenWidth={10} />
      <Meter red={25} redWidth={12} green={37} greenWidth={8} />
    </div>
    <span className="pl-[7px] font-['Noto_Sans_CJK_SC',sans-serif]">深圳双线主站2</span>
  </footer>
);

export default function App() {
  return (
    <div className="relative flex h-screen flex-col overflow-hidden bg-black font-['Liberation_Sans','Noto_Sans_CJK_SC',sans-serif]">
      <TitleBar />
      <div className="flex min-h-0 flex-1">
        <StockList />
        <main className="flex min-w-0 flex-1 flex-col">
          <ChartToolbar />
          <PricePane />
          <VolumePane />
          <MacdPane />
          <DateAxis />
          <BottomTabs />
        </main>
        <QuotePanel />
        <TradePanel />
      </div>
      <NewsTicker />
      <StatusBar />
      {/* site stamp over the ticker and the status bar */}
      <div className="absolute right-0.5 bottom-0.5 w-[220px]">
        <div className="flex h-[27px] items-center gap-[8px] bg-white/85 px-1 pt-2">
          <b className="text-[20px] leading-none text-[#2020ff]">股海网</b>
          <span className="flex text-[16px] leading-[17px] text-[#303030] italic">
            {Array.from('股票软件资源分享').map((c) => (
              <span key={c} className="w-[18px] border border-[#d0d0d0] text-center">{c}</span>
            ))}
          </span>
        </div>
        <b className="block h-[28px] bg-[#e0e0e0] pl-1 font-['Liberation_Sans',sans-serif] text-[22px] leading-[24px] text-[#e03000]">Www.Guhai.com.cn</b>
      </div>
    </div>
  );
}
